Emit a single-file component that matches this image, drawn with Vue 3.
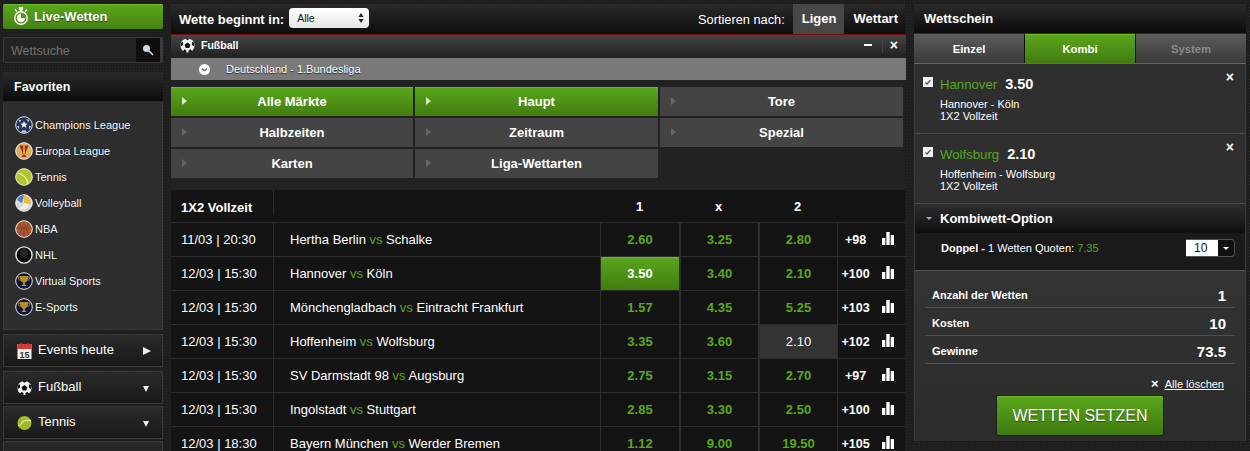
<script setup>
const favorites = [
  ['Champions League', 'cl'],
  ['Europa League', 'el'],
  ['Tennis', 'tn'],
  ['Volleyball', 'vb'],
  ['NBA', 'nba'],
  ['NHL', 'nhl'],
  ['Virtual Sports', 'cup'],
  ['E-Sports', 'cup']
]
const sideMenu = [
  { label: 'Events heute', icon: 'cal', right: true },
  { label: 'Fußball', icon: 'ball' },
  { label: 'Tennis', icon: 'tn2' }
]
const markets = [
  { label: 'Alle Märkte', on: true },
  { label: 'Haupt', on: true },
  { label: 'Tore' },
  { label: 'Halbzeiten' },
  { label: 'Zeitraum' },
  { label: 'Spezial' },
  { label: 'Karten' },
  { label: 'Liga-Wettarten' }
]
const rows = [
  { t: '11/03 | 20:30', a: 'Hertha Berlin', b: 'Schalke', o: ['2.60', '3.25', '2.80'], m: '+98' },
  { t: '12/03 | 15:30', a: 'Hannover', b: 'Köln', o: ['3.50', '3.40', '2.10'], m: '+100', green: 0 },
  { t: '12/03 | 15:30', a: 'Mönchengladbach', b: 'Eintracht Frankfurt', o: ['1.57', '4.35', '5.25'], m: '+103' },
  { t: '12/03 | 15:30', a: 'Hoffenheim', b: 'Wolfsburg', o: ['3.35', '3.60', '2.10'], m: '+102', grey: 2 },
  { t: '12/03 | 15:30', a: 'SV Darmstadt 98', b: 'Augsburg', o: ['2.75', '3.15', '2.70'], m: '+97' },
  { t: '12/03 | 15:30', a: 'Ingolstadt', b: 'Stuttgart', o: ['2.85', '3.30', '2.50'], m: '+100' },
  { t: '12/03 | 18:30', a: 'Bayern München', b: 'Werder Bremen', o: ['1.12', '9.00', '19.50'], m: '+105' }
]
const slip = [
  { team: 'Hannover', odd: '3.50', match: 'Hannover - Köln' },
  { team: 'Wolfsburg', odd: '2.10', match: 'Hoffenheim - Wolfsburg' }
]
const totals = [
  ['Anzahl der Wetten', '1'],
  ['Kosten', '10'],
  ['Gewinne', '73.5']
]
function oddClass(r, i) {
  return { green: r.green === i, grey: r.grey === i }
}
</script>

<template>
  <svg class="defs" aria-hidden="true">
    <symbol id="i-ball" viewBox="0 0 18 18">
      <circle cx="9" cy="9" r="8.500" fill="#f4f4f4" />
      <path d="M9 5.500l3.500 2.500-1.300 4.100H6.800L5.500 8zM6.500 .8L9 2.700 11.500 .8 9 .3zM1 6L3.500 4.500 3.800 8 1 10.500zM17 6L14.500 4.500 14.200 8 17 10.500zM5.500 13.500l2.500 1.800-.8 2.500-3.800-1.700zM12.500 13.500L10 15.300l.8 2.500 3.800-1.700z" fill="#0d0d0d" />
    </symbol>
    <symbol id="i-cl" viewBox="0 0 18 18">
      <circle cx="9" cy="9" r="8.300" fill="#22345c" stroke="#dfe3ea" />
      <path d="M9 5l1.100 2.400 2.500.2-1.900 1.700.6 2.500L9 10.500l-2.300 1.300.6-2.500-1.900-1.700 2.500-.2z" fill="#f2f4f8" />
      <path d="M3.500 3.500l2.600.8-1.400 2.200zM11.500 3l2.800 1 -1 2.300zM2 10l2.200.2-.2 3zM14 10l2.100.2-1.700 3zM7 14.500h4l.5 2H6.500z" fill="#d5dbe6" />
    </symbol>
    <symbol id="i-el" viewBox="0 0 18 18">
      <circle cx="9" cy="9" r="8.300" fill="#dcae5c" stroke="#f0f0f0" />
      <path d="M4.500 3.500h9L11 9.500 10 13l1.500 2h-5L8 13 7 9.500z" fill="#a5261e" />
      <path d="M8.300 3.500h1.400v9.500H8.300z" fill="#e8c24e" />
    </symbol>
    <symbol id="i-tn" viewBox="0 0 18 18">
      <circle cx="9" cy="9" r="8.300" fill="#b4c52c" stroke="#ececec" />
      <path d="M2.500 5C8 6 12 10 13 16" fill="none" stroke="#eef2b0" stroke-width="1.200" />
    </symbol>
    <symbol id="i-tn2" viewBox="0 0 16 16">
      <circle cx="8" cy="8" r="7.500" fill="#a3b82a" />
      <path d="M1 11c3 0 3.500-1.500 5-4s4-2.500 9-1.500" fill="none" stroke="#e9eeb4" stroke-width="1.200" />
    </symbol>
    <symbol id="i-vb" viewBox="0 0 18 18">
      <circle cx="9" cy="9" r="8.300" fill="#d8d8d8" stroke="#eee" />
      <path d="M9 1A8 8 0 0 0 2 6l5 3z" fill="#4a82c4" />
      <path d="M9 1c3 1 7 4 7 9l-7-1z" fill="#eeb93a" />
      <path d="M3 14c3 0 5-2 6-5l6 2a8 8 0 0 1-12 3z" fill="#ededed" />
    </symbol>
    <symbol id="i-nba" viewBox="0 0 18 18">
      <circle cx="9" cy="9" r="8.300" fill="#b05a33" stroke="#eee" />
      <path d="M1.500 8h15M9 1v16M4 3c3 3 3 9 0 12M14 3c-3 3-3 9 0 12" fill="none" stroke="#6b3218" stroke-width=".7" />
    </symbol>
    <symbol id="i-nhl" viewBox="0 0 18 18">
      <circle cx="9" cy="9" r="8.100" fill="#060606" stroke="#e8e8e8" stroke-width="1.400" />
      <ellipse cx="9" cy="7" rx="4" ry="5" fill="#262626" />
    </symbol>
    <symbol id="i-cup" viewBox="0 0 18 18">
      <circle cx="9" cy="9" r="8.300" fill="#0c1436" stroke="#e6e6e6" />
      <path d="M5 4h8v2.500c0 2-1.500 3.500-3 4v2l2 1.500H6l2-1.500v-2C6.500 10 5 8.500 5 6.500z" fill="#b98a2f" />
      <path d="M5 5H3c0 2 1 3 2.500 3.500M13 5h2c0 2-1 3-2.500 3.500" fill="none" stroke="#b98a2f" />
    </symbol>
    <symbol id="i-bars" viewBox="0 0 12 13">
      <path d="M0 6h3.300v7H0zM4.300 0h3.400v13H4.300zM8.700 3h3.300v10H8.700z" fill="#fff" />
    </symbol>
  </svg>

  <div class="page">
    <aside class="left">
      <a class="live">
        <svg class="live-icon" viewBox="0 0 16 18" width="16" height="18">
          <circle cx="8" cy="11" r="6.200" fill="none" stroke="#fff" stroke-width="1.400" />
          <path d="M8 11h4.200A4.200 4.200 0 1 1 8 6.800z" fill="#fff" />
          <path d="M6.500 .5h3V2.500h-1v2h-1v-2h-1zM2 2.500l2 2M14 2.500l-2 2" stroke="#fff" stroke-width="1.200" fill="#fff" />
        </svg>
        <span>Live-Wetten</span>
      </a>
      <div class="search">
        <span class="search-text">Wettsuche</span>
        <span class="search-btn">
          <svg viewBox="0 0 12 12" width="12" height="12">
            <circle cx="4.500" cy="4.500" r="3.500" fill="#cfdbe6" />
            <path d="M7 7l4 4" stroke="#eee" stroke-width="1.400" />
          </svg>
        </span>
      </div>
      <section class="fav">
        <h3 class="fav-head">Favoriten</h3>
        <ul class="fav-list">
          <li v-for="f in favorites" :key="f[0]">
            <svg class="fav-icon"><use :href="'#i-' + f[1]" /></svg>
            <span>{{ f[0] }}</span>
          </li>
        </ul>
      </section>
      <div v-for="m in sideMenu" :key="m.label" class="side">
        <svg v-if="m.icon === 'cal'" class="side-icon" viewBox="0 0 14 16">
          <rect x="0" y="1" width="14" height="15" fill="#f1efea" />
          <rect x="0" y="1" width="14" height="5" fill="#d23a3a" />
          <path d="M3 0h1.300v3H3zM9.700 0H11v3H9.700z" fill="#c33" />
          <text x="7" y="14.500" text-anchor="middle" class="cal-day">15</text>
        </svg>
        <svg v-else class="side-icon"><use :href="'#i-' + m.icon" /></svg>
        <span class="side-label">{{ m.label }}</span>
        <i :class="m.right ? 'tri-r' : 'tri-d'"></i>
      </div>
      <div class="side"></div>
    </aside>

    <main class="center">
      <header class="top">
        <b class="top-label">Wette beginnt in:</b>
        <span class="sel">Alle
          <svg class="updown" viewBox="0 0 6 10" width="6" height="10"><path d="M3 0l2.600 4H.4zM3 10L.4 6h5.200z" fill="#222" /></svg>
        </span>
        <span class="sort-label">Sortieren nach:</span>
        <b class="sort on">Ligen</b>
        <b class="sort">Wettart</b>
      </header>
      <div class="sport">
        <svg class="sport-icon"><use href="#i-ball" /></svg>
        <b>Fußball</b>
        <span class="ctl"><i class="minus"></i><i class="sep"></i><span class="x">×</span></span>
      </div>
      <div class="league">
        <span class="chev"><svg viewBox="0 0 11 11" width="11" height="11"><circle cx="5.500" cy="5.500" r="5.500" fill="#fff" /><path d="M3 4.500l2.500 2.200L8 4.500" fill="none" stroke="#666" stroke-width="1.300" /></svg></span>
        <span>Deutschland - 1.Bundesliga</span>
      </div>
      <div class="markets">
        <div v-for="m in markets" :key="m.label" class="market" :class="{ on: m.on }">
          <i class="mk-tri"></i>{{ m.label }}
        </div>
      </div>
      <div class="table">
        <div class="thead row">
          <b class="c-date">1X2 Vollzeit</b>
          <span class="c-team"></span>
          <b class="c-odd">1</b><b class="c-odd">x</b><b class="c-odd">2</b>
          <span class="c-more"></span>
        </div>
        <div v-for="r in rows" :key="r.a" class="row body">
          <span class="c-date">{{ r.t }}</span>
          <span class="c-team">{{ r.a }} <em>vs</em> {{ r.b }}</span>
          <b v-for="(o, i) in r.o" :key="i" class="c-odd" :class="oddClass(r, i)">{{ o }}</b>
          <span class="c-more"><b>{{ r.m }}</b><svg class="bars"><use href="#i-bars" /></svg></span>
        </div>
      </div>
    </main>

    <aside class="right">
      <h3 class="slip-head">Wettschein</h3>
      <div class="tabs">
        <b class="tab">Einzel</b>
        <b class="tab on">Kombi</b>
        <b class="tab off">System</b>
      </div>
      <div v-for="s in slip" :key="s.team" class="bet">
        <span class="check"><svg viewBox="0 0 10 10" width="10" height="10"><path d="M2.500 5.500l1.500 1.500 3.500-4" fill="none" stroke="#555" stroke-width="1.200" /></svg></span>
        <div class="bet-main">
          <div class="bet-title"><span class="team">{{ s.team }}</span><b>{{ s.odd }}</b></div>
          <div class="bet-sub">{{ s.match }}</div>
          <div class="bet-sub">1X2 Vollzeit</div>
        </div>
        <span class="bet-x">×</span>
      </div>
      <div class="opt-head"><i class="opt-tri"></i><b>Kombiwett-Option</b></div>
      <div class="opt">
        <span><b>Doppel -</b> 1 Wetten Quoten: <em>7.35</em></span>
        <span class="stake"><span>10</span><i></i></span>
      </div>
      <div class="sum">
        <div v-for="t in totals" :key="t[0]" class="sum-row"><b>{{ t[0] }}</b><b class="sum-val">{{ t[1] }}</b></div>
        <div class="clear"><span class="clear-x">×</span><u>Alle löschen</u></div>
        <div class="cta-wrap"><a class="cta">WETTEN SETZEN</a></div>
      </div>
    </aside>
  </div>
</template>

<style>
html, body { margin: 0; background: #1e1e1e; overflow: hidden; }
</style>

<style scoped>
.defs { position: absolute; width: 0; height: 0; }
.page {
  display: flex;
  height: 451px;
  overflow: hidden;
  padding-top: 4px;
  box-sizing: border-box;
  font-family: "Liberation Sans", Arial, sans-serif;
  color: #fff;
  background: #1e1e1e radial-gradient(rgba(255, 255, 255, .05) 1px, transparent 1px) 0 0 / 3px 3px;
}
b { font-weight: 700; }
em { font-style: normal; color: #5aa81e; }
h3 { margin: 0; }
ul { margin: 0; padding: 0; list-style: none; }

.left { width: 160px; margin-left: 3px; flex: none; }
.live {
  height: 25px;
  display: flex;
  align-items: center;
  gap: 5px;
  padding-left: 10px;
  box-sizing: border-box;
  border-radius: 2px;
  background: linear-gradient(#5aa71c, #468213);
  box-shadow: inset 0 1px 0 #6cbb28;
  font-size: 13px;
  font-weight: 700;
  text-shadow: 0 1px 1px #2a4d0a;
}
.live-icon { margin-top: -1px; }
.search {
  height: 26px;
  margin-top: 8px;
  display: flex;
  box-sizing: border-box;
  border: 1px solid #3a3a3a;
  border-right-width: 3px;
  border-radius: 2px;
  background: #232323;
}
.search-text { flex: 1; padding-left: 7px; line-height: 26px; font-size: 12.500px; color: #717171; }
.search-btn {
  width: 24px;
  display: flex;
  align-items: center;
  justify-content: center;
  background: #0e0e0e;
}
.fav { margin-top: 9px; border: 1px solid #3a3a3a; border-top: 0; background: #2e2e2e; height: 258px; box-sizing: border-box; }
.fav-head {
  height: 30px;
  margin: 0 -1px;
  padding-left: 11px;
  box-sizing: border-box;
  background: linear-gradient(#2a2a2a, #0c0c0c);
  border-bottom: 1px solid #6d0a0a;
  line-height: 31px;
  font-size: 12.500px;
}
.fav-list { padding-top: 10px; }
.fav-list li { height: 26px; display: flex; align-items: center; gap: 2px; padding-left: 11px; font-size: 11px; text-shadow: 0 0 1px #000; }
.fav-icon { width: 18px; height: 18px; flex: none; }
.side {
  height: 33px;
  margin-top: 4px;
  display: flex;
  align-items: center;
  box-sizing: border-box;
  padding-left: 13px;
  padding-right: 11px;
  border: 1px solid #3a3a3a;
  background: linear-gradient(#2a2a2a, #191919);
}
.side:nth-of-type(n + 4) { margin-top: 2px; }
.side-icon { width: 15px; height: 16px; flex: none; }
.cal-day { font-size: 9px; font-weight: 700; font-family: "Liberation Sans", Arial, sans-serif; fill: #333; }
.side-label { flex: 1; padding: 0 0 2px 6px; font-size: 13px; }
.tri-r { border-left: 8px solid #eee; border-top: 4.500px solid transparent; border-bottom: 4.500px solid transparent; }
.tri-d { border-top: 6px solid #eee; border-left: 3.500px solid transparent; border-right: 3.500px solid transparent; margin: 3px 2px 0 0; }

.center { width: 734px; margin-left: 8px; flex: none; background: #222; }
.top {
  height: 31px;
  display: flex;
  align-items: center;
  box-sizing: border-box;
  padding-left: 8px;
  background: linear-gradient(#2a2a2a, #0d0d0d);
  border-bottom: 1px solid #7a0c0c;
  font-size: 13px;
}
.sel {
  width: 80px;
  height: 20px;
  margin-left: 5px;
  margin-top: -2px;
  padding-left: 8px;
  box-sizing: border-box;
  display: flex;
  align-items: center;
  justify-content: space-between;
  border-radius: 4px;
  background: linear-gradient(#fff, #e6e6e6);
  color: #111;
  font-size: 10.500px;
}
.updown { margin-right: 5px; }
.sort-label { margin-left: auto; margin-right: 8px; font-size: 12.800px; }
.sort { height: 30px; line-height: 30px; padding: 0 8px 0 9px; }
.sort.on { background: #474747; }
.sort:last-child { padding: 0 7px 0 9px; }
.sport {
  height: 23px;
  margin-right: -1px;
  display: flex;
  align-items: center;
  padding: 0 0 3px 9px;
  box-sizing: border-box;
  background: linear-gradient(#444, #202020);
  font-size: 10.500px;
}
.sport-icon { width: 15px; height: 15px; margin-right: 6px; }
.ctl { margin-left: auto; display: flex; align-items: center; }
.minus { width: 8px; height: 2px; background: #fff; margin-right: 10px; }
.sep { width: 1px; height: 15px; background: #444; margin-right: 7px; }
.x { font-size: 14px; font-weight: 700; margin-right: 8px; line-height: 15px; }
.league {
  height: 22px;
  margin-right: -1px;
  display: flex;
  align-items: center;
  padding-left: 28px;
  background: #7a7a7a;
  font-size: 11px;
  text-shadow: 0 1px 1px #222;
}
.chev { width: 11px; height: 11px; margin-right: 16px; line-height: 0; }
.markets {
  display: grid;
  grid-template-columns: 242px 243px 243px;
  grid-auto-rows: 29px;
  gap: 2px;
  padding: 7px 0 12px;
  min-height: 91px;
}
.market {
  position: relative;
  display: flex;
  align-items: center;
  justify-content: center;
  background: #444;
  font-size: 13px;
  font-weight: 700;
}
.market.on { background: linear-gradient(#5aa71c, #427c10); box-shadow: inset 0 1px 0 #6cbb28; }
.mk-tri {
  position: absolute;
  left: 11px;
  top: 10px;
  border-left: 5px solid #666;
  border-top: 4.500px solid transparent;
  border-bottom: 4.500px solid transparent;
}
.market.on .mk-tri { border-left-color: #dbe9c8; }
.table { background: #141414; }
.row { display: flex; height: 34px; box-sizing: border-box; border-top: 1px solid #2e2e2e; font-size: 13px; }
.row > * { display: flex; align-items: center; }
.thead { height: 32px; border-top: 0; }
.thead .c-date { padding-top: 2px; }
.thead .c-team { border-left: 1px solid #2e2e2e; margin-bottom: 7px; }
.thead .c-odd { border: 0; color: #fff; padding-top: 1px; }
.thead .c-more { border: 0; }
.c-date { width: 102px; padding-left: 10px; box-sizing: border-box; flex: none; }
.c-team { width: 327px; padding-left: 16px; box-sizing: border-box; flex: none; border-left: 1px solid #2e2e2e; white-space: pre; }
.c-odd {
  width: 79px;
  flex: none;
  box-sizing: border-box;
  justify-content: center;
  border-left: 1px solid #2e2e2e;
  color: #5aa81e;
}
.c-odd + .c-odd { border-left: 2px solid #2e2e2e; }
.thead .c-odd + .c-odd { border-left: 0; }
.c-odd.green { background: linear-gradient(#5aa71c, #427c10); color: #fff; box-shadow: inset 0 1px 0 #6cbb28; }
.c-odd.grey { background: #333; color: #fff; font-weight: 400; }
.c-more { flex: 1; border-left: 1px solid #2e2e2e; position: relative; justify-content: flex-start; padding-left: 3px; }
.c-more b { width: 29px; text-align: center; font-size: 12.500px; }
.bars { width: 12px; height: 13px; position: absolute; right: 11px; top: 9px; }

.right { width: 332px; margin-left: 9px; flex: none; height: 437px; box-sizing: border-box; border: 1px solid #3a3a3a; border-top: 0; background: #2f2f2f; }
.slip-head {
  height: 30px;
  margin: 0 -1px;
  padding-left: 10px;
  box-sizing: border-box;
  background: linear-gradient(#2a2a2a, #0c0c0c);
  border-bottom: 1px solid #7a0c0c;
  line-height: 29px;
  font-size: 13px;
}
.tabs { display: flex; height: 30px; margin: 0 -1px; border-bottom: 1px solid #666; box-sizing: border-box; }
.tab {
  flex: 1;
  display: flex;
  align-items: center;
  justify-content: center;
  background: linear-gradient(#5c5c5c, #3a3a3a);
  font-size: 11.300px;
  border-right: 1px solid #111;
}
.tab.on { background: linear-gradient(#5aa71c, #427c10); box-shadow: inset 0 1px 0 #6cbb28; }
.tab.off { color: #8a8a8a; border-right: 0; }
.bet {
  height: 70px;
  display: flex;
  box-sizing: border-box;
  position: relative;
  border-bottom: 1px solid #4a4a4a;
  padding: 12px 0 0 8px;
}
.check {
  width: 10px;
  height: 10px;
  margin-top: 1px;
  flex: none;
  background: #f2f2f2;
  line-height: 0;
}
.bet-main { margin-left: 7px; }
.bet-title { display: flex; align-items: baseline; gap: 8px; font-size: 14.500px; height: 18px; }
.team { color: #5aa81e; font-size: 13.200px; }
.bet-sub { font-size: 11px; line-height: 12px; }
.bet-title + .bet-sub { margin-top: 4px; }
.bet-x { position: absolute; right: 11px; top: 5px; font-size: 14px; font-weight: 700; }
.opt-head {
  height: 29px;
  display: flex;
  align-items: center;
  padding-left: 11px;
  background: linear-gradient(#2e2e2e, #0f0f0f);
  font-size: 13px;
}
.opt-tri { border-top: 3px solid #aaa; border-left: 3px solid transparent; border-right: 3px solid transparent; margin-right: 8px; }
.opt {
  height: 38px;
  display: flex;
  align-items: center;
  justify-content: space-between;
  box-sizing: border-box;
  padding: 0 10px 8px 26px;
  background: #1a1a1a;
  border-bottom: 1px solid #555;
  font-size: 11px;
}
.stake { width: 49px; height: 18px; display: flex; border-radius: 0 4px 4px 0; border: 1px solid #555; border-left: 0; box-sizing: border-box; overflow: hidden; font-size: 12px; }
.stake span { width: 32px; background: #fff; color: #111; padding-left: 8px; line-height: 16px; box-sizing: border-box; }
.stake i { flex: 1; background: #111; position: relative; }
.stake i::after { content: ""; position: absolute; left: 5px; top: 7px; border-top: 3px solid #fff; border-left: 3px solid transparent; border-right: 3px solid transparent; }
.sum { padding: 9px 10px 0; background: linear-gradient(#333, #2c2c2c); height: 170px; box-sizing: border-box; }
.sum-row {
  height: 28px;
  display: flex;
  align-items: center;
  justify-content: space-between;
  box-sizing: border-box;
  padding: 3px 9px 0 7px;
  border-bottom: 1px solid #505050;
  font-size: 11px;
}
.sum-val { font-size: 15px; }
.clear { display: flex; justify-content: flex-end; align-items: center; gap: 6px; margin-top: 14px; padding-right: 11px; font-size: 11px; }
.clear-x { font-size: 13px; font-weight: 700; line-height: 12px; }
.cta-wrap { display: flex; justify-content: center; margin-top: 6px; }
.cta {
  width: 166px;
  height: 39px;
  display: flex;
  align-items: center;
  justify-content: center;
  border-radius: 2px;
  background: linear-gradient(#5aa71c, #3f7a10);
  box-shadow: inset 0 1px 0 #6cbb28, 0 0 0 1px #1e1e1e;
  font-size: 16px;
  text-shadow: 0 1px 1px #2a4d0a;
}
</style>
